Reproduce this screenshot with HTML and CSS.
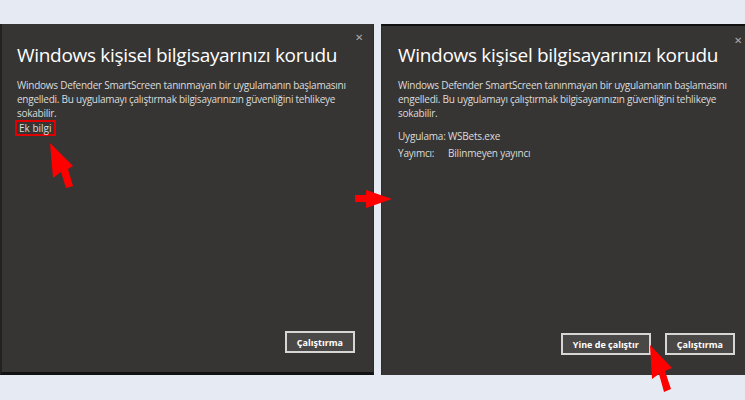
FILE: index.html
```html
<!DOCTYPE html>
<html lang="tr">
<head>
<meta charset="UTF-8">
<title>SmartScreen</title>
<link rel="stylesheet" href="styles.css">
</head>
<body>

<div class="stage">
    <div class="dialog dialog-left">
        <span class="close">&#x2715;</span>
        <h2>Windows kişisel bilgisayarınızı korudu</h2>
        <p class="msg">Windows Defender SmartScreen tanınmayan bir uygulamanın başlamasını engelledi. Bu uygulamayı çalıştırmak bilgisayarınızın güvenliğini tehlikeye sokabilir.</p>
        <a class="more">Ek bilgi</a>
        <div class="actions">
            <button class="btn">Çalıştırma</button>
        </div>
    </div>

    <div class="dialog dialog-right">
        <span class="close">&#x2715;</span>
        <h2>Windows kişisel bilgisayarınızı korudu</h2>
        <p class="msg">Windows Defender SmartScreen tanınmayan bir uygulamanın başlamasını engelledi. Bu uygulamayı çalıştırmak bilgisayarınızın güvenliğini tehlikeye sokabilir.</p>
        <div class="info">
            <div><span class="key">Uygulama:</span> WSBets.exe</div>
            <div><span class="key key-pad">Yayımcı:</span>Bilinmeyen yayıncı</div>
        </div>
        <div class="actions">
            <button class="btn">Yine de çalıştır</button>
            <button class="btn">Çalıştırma</button>
        </div>
    </div>

    <svg class="arrows" width="745" height="400" viewBox="0 0 745 400">
        <polygon fill="#ff0000" points="50,143 53,178 61,172 66,188 73,186 68,169 73,166"/>
        <polygon fill="#ff0000" points="355,195 366,195 366,190 392,199 366,208 366,202 355,202"/>
        <polygon fill="#ff0000" points="650,345 652,379 659,374 664,392 671,389 665,371 672,368"/>
    </svg>
</div>

</body>
</html>
```

FILE: styles.css
```css
body {
    margin: 0;
    padding: 0;
    background-color: #e6eaf2;
    font-family: "Open Sans", "Noto Sans", sans-serif;
}
.stage {
    position: relative;
    width: 745px;
    height: 400px;
    display: flex;
    gap: 7px;
    padding-top: 24px;
    box-sizing: border-box;
}
.dialog {
    position: relative;
    height: 351px;
    background-color: #363533;
    box-sizing: border-box;
    padding: 18px 17px 0 17px;
    display: flex;
    flex-direction: column;
    color: #dcdcdc;
}
.dialog-left {
    width: 374px;
    border-left: 2px solid #222;
    border-right: 1px solid #2b2b2a;
    border-bottom: 3px solid #121212;
    padding-left: 15px;
}
.dialog-right {
    width: 364px;
    border-top: 2px solid #111;
    border-left: 1px solid #2b2b2a;
    padding-left: 16px;
    padding-top: 16px;
}
.close {
    position: absolute;
    top: 6px;
    right: 10px;
    font-size: 10px;
    color: #aaa;
}
.dialog-right .close {
    right: 3px;
    top: 7px;
}
h2 {
    margin: 0 0 10px 0;
    font-weight: normal;
    font-size: 19px;
    line-height: 26px;
    color: #fff;
    letter-spacing: -0.3px;
    white-space: nowrap;
}
.msg {
    margin: 0;
    font-size: 10px;
    line-height: 14px;
    letter-spacing: -0.25px;
    width: 340px;
}
.more {
    align-self: flex-start;
    margin-top: 0;
    margin-left: -2px;
    padding: 0 2px;
    border: 2px solid #e00000;
    font-size: 10px;
    line-height: 12px;
    color: #dcdcdc;
}
.info {
    margin-top: 8px;
    font-size: 10px;
    line-height: 17px;
    letter-spacing: -0.2px;
}
.key-pad {
    display: inline-block;
    width: 50px;
}
.actions {
    margin-top: auto;
    margin-bottom: 19px;
    display: flex;
    justify-content: flex-end;
    gap: 14px;
}
.dialog-left .actions {
    margin-right: 1px;
}
.dialog-right .actions {
    margin-bottom: 20px;
    margin-right: -7px;
}
.btn {
    height: 22px;
    padding: 0 10px;
    min-width: 68px;
    background-color: #4a4846;
    border: 2px solid #d6d6d6;
    color: #fff;
    font-family: "Open Sans", sans-serif;
    font-weight: bold;
    font-size: 9px;
}
.dialog-right .btn:first-child {
    min-width: 88px;
}
.arrows {
    position: absolute;
    left: 0;
    top: 0;
    pointer-events: none;
}
```
